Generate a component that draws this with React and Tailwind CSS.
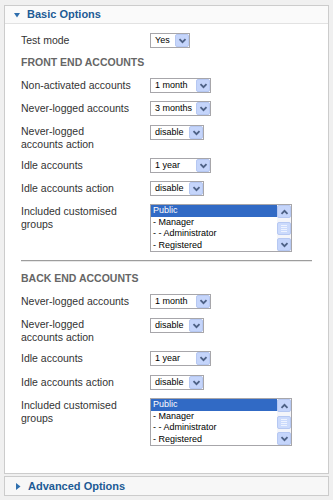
import React from "react";

function Chevron({ dir = "down" }) {
  return (
    <svg width="9" height="6" viewBox="0 0 9 6" className="block">
      {dir === "down" ? (
        <path d="M1.5 1.2 L4.5 4.2 L7.5 1.2" fill="none" stroke="#4d6185" strokeWidth="1.8" />
      ) : (
        <path d="M1.5 4.8 L4.5 1.8 L7.5 4.8" fill="none" stroke="#4d6185" strokeWidth="1.8" />
      )}
    </svg>
  );
}

function ScrollBtn({ dir }) {
  return (
    <div className="h-[13px] w-full flex items-center justify-center bg-[#c5d5fb] border border-[#b6c8f2] rounded-[2px]">
      <Chevron dir={dir} />
    </div>
  );
}

function Select({ value, w }) {
  return (
    <div className={`${w} h-[15px] border border-[#a7a6aa] bg-white flex items-center shrink-0`}>
      <span className="flex-1 pl-[4px] text-[9px] leading-none text-black">{value}</span>
      <span className="w-[14px] h-[13px] mr-[0px] flex items-center justify-center bg-[#c5d5fb] border border-[#b6c8f2] rounded-[2px]">
        <Chevron dir="down" />
      </span>
    </div>
  );
}

function ListBox() {
  const items = ["Public", "- Manager", "- - Administrator", "- Registered"];
  return (
    <div className="w-[142px] h-[48px] border border-[#a7a6aa] bg-white flex shrink-0">
      <div className="flex-1 flex flex-col">
        {items.map((it, i) => (
          <div
            key={it}
            className={
              i === 0
                ? "h-[11.5px] leading-[11.5px] pl-[2px] text-[9px] bg-[#316ac5] text-white"
                : "h-[11.5px] leading-[11.5px] pl-[2px] text-[9px] text-black"
            }
          >
            {it}
          </div>
        ))}
      </div>
      <div className="w-[14px] flex flex-col bg-[#f4f5fa]">
        <ScrollBtn dir="up" />
        <div className="flex-1 flex flex-col justify-center">
          <div className="h-[13px] mx-0 bg-[#cbdafc] border border-[#b6c8f2] rounded-[2px] flex flex-col items-center justify-center gap-[1px]">
            <div className="w-[6px] h-px bg-[#eef3ff]" />
            <div className="w-[6px] h-px bg-[#eef3ff]" />
            <div className="w-[6px] h-px bg-[#eef3ff]" />
            <div className="w-[6px] h-px bg-[#eef3ff]" />
          </div>
        </div>
        <ScrollBtn dir="down" />
      </div>
    </div>
  );
}

function Row({ mt, label, children, two }) {
  return (
    <div className={`${mt} flex ${two ? "items-start" : "items-center"}`}>
      <div className={`w-[129px] shrink-0 text-[10.5px] text-[#333] ${two ? "leading-[12.5px] pt-[0px]" : "leading-[15px]"}`}>
        {label}
      </div>
      {children}
    </div>
  );
}

function Heading({ mt, children }) {
  return (
    <div className={`${mt} h-[12px] leading-[12px] text-[10.5px] font-bold text-[#666]`}>{children}</div>
  );
}

export default function App() {
  return (
    <div className="min-h-[500px] bg-[#f0f0f0] pt-[5px] px-[4px] pb-[4px] font-['Liberation_Sans',Arial,sans-serif]">
      <div className="border border-[#cccccc] bg-white">
        <div className="h-[18px] bg-[#fafafa] border-b border-[#e2e2e2] flex items-center pl-[9px]">
          <svg width="6" height="5" viewBox="0 0 6 5" className="block mr-[7px] mt-[1px]">
            <polygon points="0,0 6,0 3,4.5" fill="#2f6fae" />
          </svg>
          <span className="text-[11px] font-bold text-[#1d5b95] leading-none">Basic Options</span>
        </div>
        <div className="px-4 pt-[9px] pb-[27px] flex flex-col">
          <Row mt="mt-0" label="Test mode">
            <Select value="Yes" w="w-[40px]" />
          </Row>
          <Heading mt="mt-[8px]">FRONT END ACCOUNTS</Heading>
          <Row mt="mt-[10px]" label="Non-activated accounts">
            <Select value="1 month" w="w-[61px]" />
          </Row>
          <Row mt="mt-[8px]" label="Never-logged accounts">
            <Select value="3 months" w="w-[61px]" />
          </Row>
          <Row mt="mt-[9px]" two label={<>Never-logged<br />accounts action</>}>
            <Select value="disable" w="w-[54px]" />
          </Row>
          <Row mt="mt-[8px]" label="Idle accounts">
            <Select value="1 year" w="w-[61px]" />
          </Row>
          <Row mt="mt-[8px]" label="Idle accounts action">
            <Select value="disable" w="w-[54px]" />
          </Row>
          <Row mt="mt-[8px]" two label={<span className="block pt-[1px] leading-[13px]">Included customised<br />groups</span>}>
            <ListBox />
          </Row>
          <div className="mt-[8px] h-[2px] border-t border-[#9d9d9d] border-b border-b-[#e8e8e8]" />
          <Heading mt="mt-[10px]">BACK END ACCOUNTS</Heading>
          <Row mt="mt-[10px]" label="Never-logged accounts">
            <Select value="1 month" w="w-[61px]" />
          </Row>
          <Row mt="mt-[9px]" two label={<>Never-logged<br />accounts action</>}>
            <Select value="disable" w="w-[54px]" />
          </Row>
          <Row mt="mt-[8px]" label="Idle accounts">
            <Select value="1 year" w="w-[61px]" />
          </Row>
          <Row mt="mt-[9px]" label="Idle accounts action">
            <Select value="disable" w="w-[54px]" />
          </Row>
          <Row mt="mt-[8px]" two label={<span className="block pt-[1px] leading-[13px]">Included customised<br />groups</span>}>
            <ListBox />
          </Row>
        </div>
      </div>
      <div className="mt-[2px] border border-[#cccccc] bg-[#f7f7f7] h-[20px] flex items-center pl-[11px]">
        <svg width="5" height="7" viewBox="0 0 5 7" className="block mr-[7px]">
          <polygon points="0,0 4.5,3.5 0,7" fill="#2f6fae" />
        </svg>
        <span className="text-[11px] font-bold text-[#1d5b95] leading-none">Advanced Options</span>
      </div>
    </div>
  );
}
